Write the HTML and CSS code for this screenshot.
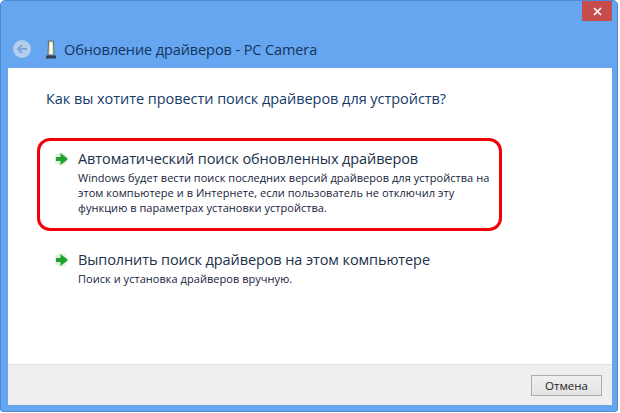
FILE: index.html
```html
<!DOCTYPE html>
<html lang="ru">
<head>
<meta charset="utf-8">
<title>Обновление драйверов - PC Camera</title>
<link rel="stylesheet" href="styles.css">
</head>
<body>
<div class="window">
  <header class="titlebar">
    <div class="caption-row">
      <button class="close" aria-label="Закрыть">
        <svg width="9" height="9" viewBox="0 0 9 9"><path d="M1 1L8 8M8 1L1 8" stroke="#fff" stroke-width="1.7"/></svg>
      </button>
    </div>
    <div class="nav-row">
      <span class="back">
        <svg width="18" height="18" viewBox="0 0 18 18"><circle cx="9" cy="9" r="9" fill="#b4cdec"/><path d="M14 9H5.5M9 5L5 9L9 13" fill="none" stroke="#7fa6d6" stroke-width="2"/></svg>
      </span>
      <svg class="device" width="10" height="19" viewBox="0 0 10 19">
        <path d="M2.5 1H7.5L8 15H2Z" fill="#e8e4c8" stroke="#5d6a63" stroke-width="1"/>
        <rect x="4" y="3" width="2" height="11" fill="#fffef2"/>
        <rect x="0" y="15.5" width="10" height="3" fill="#2f4250"/>
      </svg>
      <span class="title">Обновление драйверов - PC Camera</span>
    </div>
  </header>
  <main class="content">
    <h1 class="question">Как вы хотите провести поиск драйверов для устройств?</h1>
    <div class="options">
      <div class="option highlighted">
        <svg class="arrow" width="14" height="14" viewBox="0 0 14 14"><circle cx="6" cy="7" r="6.5" fill="#d3e4d0" opacity=".7"/><path d="M1 5H5.5V1L13 7L5.5 13V9H1Z" fill="#1fa32e"/></svg>
        <div class="option-text">
          <div class="option-title">Автоматический поиск обновленных драйверов</div>
          <div class="option-desc">Windows будет вести поиск последних версий драйверов для устройства на этом компьютере и в Интернете, если пользователь не отключил эту функцию в параметрах установки устройства.</div>
        </div>
      </div>
      <div class="option">
        <svg class="arrow" width="14" height="14" viewBox="0 0 14 14"><circle cx="6" cy="7" r="6.5" fill="#d3e4d0" opacity=".7"/><path d="M1 5H5.5V1L13 7L5.5 13V9H1Z" fill="#1fa32e"/></svg>
        <div class="option-text">
          <div class="option-title">Выполнить поиск драйверов на этом компьютере</div>
          <div class="option-desc">Поиск и установка драйверов вручную.</div>
        </div>
      </div>
    </div>
  </main>
  <footer class="footer">
    <button class="cancel">Отмена</button>
  </footer>
</div>
</body>
</html>
```
FILE: styles.css
```css
* { box-sizing: border-box; }
html, body { margin: 0; padding: 0; background: #fff; }
body {
  width: 620px;
  height: 413px;
  padding: 0 2px 1px 0;
  font-family: "Open Sans", "Noto Sans", sans-serif;
  overflow: hidden;
}
.window {
  height: 412px;
  display: flex;
  flex-direction: column;
  background: #66a6f1;
  border: 1px solid #4d8ad6;
  border-radius: 5px 5px 3px 3px;
  padding: 0 5px 6px 7px;
}
.titlebar { height: 67px; display: flex; flex-direction: column; flex: none; }
.caption-row { display: flex; justify-content: flex-end; height: 20px; }
.close {
  width: 30px;
  height: 20px;
  padding: 0;
  border: 0;
  background: #c74d4d;
  display: flex;
  align-items: center;
  justify-content: center;
}
.nav-row { display: flex; align-items: center; margin-top: 18px; height: 20px; padding-left: 5px; }
.back { width: 18px; height: 18px; display: block; line-height: 0; }
.device { margin-left: 15px; }
.title { margin-left: 8px; font-size: 14.5px; color: #14345c; letter-spacing: -0.1px; white-space: nowrap; }
.content {
  flex: 1;
  background: #fff;
  padding: 21px 0 0 38px;
  display: flex;
  flex-direction: column;
}
.question {
  margin: 0;
  font-size: 14.5px;
  line-height: 20px;
  font-weight: 400;
  color: #153a68;
  letter-spacing: -0.05px;
  white-space: nowrap;
}
.options { display: flex; flex-direction: column; margin-top: 40px; gap: 35px; }
.option { display: flex; align-items: flex-start; gap: 9px; padding-left: 9px; }
.arrow { margin-top: 3px; flex: none; }
.highlighted { position: relative; }
.highlighted::before {
  content: "";
  box-sizing: border-box;
  position: absolute;
  left: -9px;
  top: -11px;
  width: 465px;
  height: 93px;
  border: 3px solid #f00007;
  border-radius: 13px;
}
.option-text { width: 425px; }
.option-title { font-size: 14.5px; line-height: 20px; color: #20304a; letter-spacing: -0.1px; white-space: nowrap; }
.option-desc { margin-top: 1px; font-size: 11px; line-height: 15px; color: #15243c; letter-spacing: 0.04px; }
.footer {
  height: 41px;
  flex: none;
  background: #efefef;
  border-top: 1px solid #dfdfdf;
  display: flex;
  justify-content: flex-end;
  align-items: flex-start;
  padding: 10px 10px 0 0;
}
.cancel {
  width: 71px;
  height: 21px;
  padding: 0;
  background: linear-gradient(#f0f0f0, #e3e3e3);
  border: 1px solid #adadad;
  font-family: inherit;
  font-size: 11.5px;
  color: #222;
}
```
